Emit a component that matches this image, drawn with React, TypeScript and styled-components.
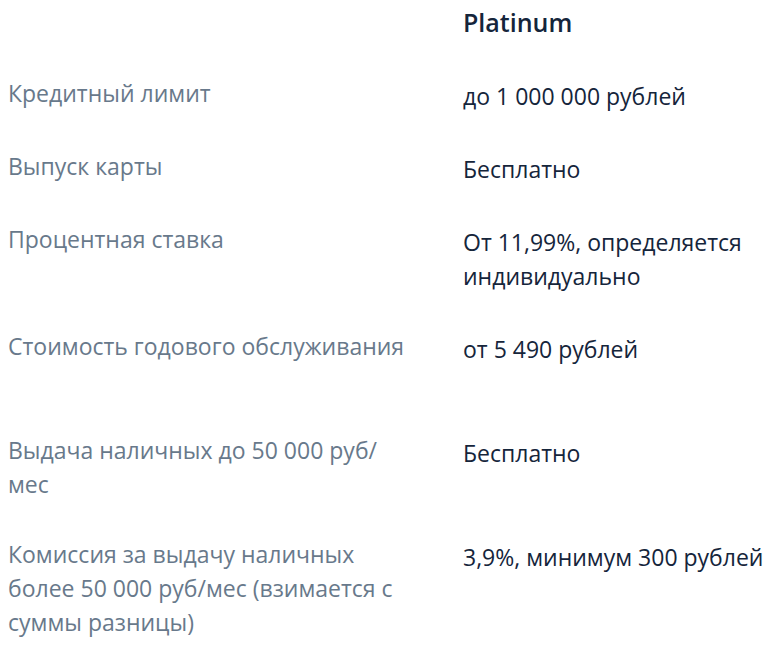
import React from "react";
import styled, {createGlobalStyle} from "styled-components";

type Item = {
    label: string,
    value: string,
    tall?: boolean,
}

const items: Item[] = [
    {label: "Кредитный лимит", value: "до 1 000 000 рублей"},
    {label: "Выпуск карты", value: "Бесплатно"},
    {label: "Процентная ставка", value: "От 11,99%, определяется индивидуально"},
    {label: "Стоимость годового обслуживания", value: "от 5 490 рублей", tall: true},
    {label: "Выдача наличных до 50 000 руб/мес", value: "Бесплатно"},
    {label: "Комиссия за выдачу наличных более 50\u00a0000 руб/мес (взимается с суммы разницы)", value: "3,9%, минимум 300 рублей"},
]

const App: React.FC = () => {
    return (
        <>
            <GlobalStyle/>
            <Table>
                <Header>
                    <span/>
                    <CardName>Platinum</CardName>
                </Header>
                <Rows>
                    {items.map(item => (
                        <Row key={item.label} $tall={item.tall}>
                            <Label>{item.label}</Label>
                            <Value>{item.value}</Value>
                        </Row>
                    ))}
                </Rows>
            </Table>
        </>
    )
}

export default App;

const GlobalStyle = createGlobalStyle`
    body {
        margin: 8px;
        background: #ffffff;
        font-family: "Open Sans", "Noto Sans", sans-serif;
    }
`

const Table = styled.div`
    display: flex;
    flex-direction: column;
    gap: 40px;
`

const Header = styled.div`
    display: grid;
    grid-template-columns: 455px 1fr;
`

const CardName = styled.div`
    font-size: 25px;
    line-height: 28px;
    font-weight: 600;
    color: #15253b;
`

const Rows = styled.div`
    display: flex;
    flex-direction: column;
    gap: 36px;
`

const Row = styled.div<{ $tall?: boolean }>`
    display: grid;
    grid-template-columns: 455px 1fr;
    min-height: ${p => p.$tall ? "68px" : "auto"};
`

const Label = styled.div`
    padding-right: 46px;
    font-size: 23px;
    line-height: 34px;
    color: #68798b;
`

const Value = styled.div`
    padding-top: 3px;
    font-size: 23px;
    line-height: 34px;
    color: #15253b;
`
